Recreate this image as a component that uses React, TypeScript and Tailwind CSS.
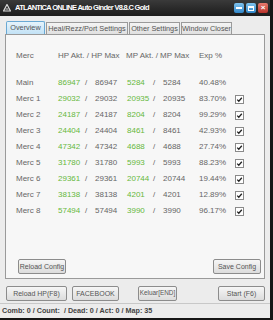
import React from "react";

type Row = {
  name: string;
  hp: string;
  mp: string;
  exp: string;
  check: boolean;
};

const rows: Row[] = [
  { name: "Main", hp: "86947", mp: "5284", exp: "40.48%", check: false },
  { name: "Merc 1", hp: "29032", mp: "20935", exp: "83.70%", check: true },
  { name: "Merc 2", hp: "24187", mp: "8204", exp: "99.29%", check: true },
  { name: "Merc 3", hp: "24404", mp: "8461", exp: "42.93%", check: true },
  { name: "Merc 4", hp: "47342", mp: "4688", exp: "27.74%", check: true },
  { name: "Merc 5", hp: "31780", mp: "5993", exp: "88.23%", check: true },
  { name: "Merc 6", hp: "29361", mp: "20744", exp: "19.44%", check: true },
  { name: "Merc 7", hp: "38138", mp: "4201", exp: "12.89%", check: true },
  { name: "Merc 8", hp: "57494", mp: "3990", exp: "96.17%", check: true },
];

const tabs = [
  { label: "Overview", w: "w-[39px]", active: true },
  { label: "Heal/Rezz/Port Settings", w: "w-[82px]", active: false },
  { label: "Other Settings", w: "w-[51px]", active: false },
  { label: "Window Closer", w: "w-[51px]", active: false },
];

const Btn = ({ label, w, size = "text-[7px]" }: { label: string; w: string; size?: string }) => (
  <button
    type="button"
    className={`${w} ${size} h-[15px] flex items-center justify-center whitespace-nowrap rounded-[2px] border border-[#8c8c8c] bg-gradient-to-b from-[#f6f6f6] to-[#dcdcdc] leading-none text-[#555]`}
  >
    {label}
  </button>
);

const CheckBox = () => (
  <div className="w-[9px] h-[9px] border border-[#8a8a8a] bg-white flex items-center justify-center">
    <svg width="7" height="7" viewBox="0 0 7 7">
      <path d="M1.2 3.6 L2.8 5.2 L5.8 1.8" stroke="#222" strokeWidth="1.3" fill="none" />
    </svg>
  </div>
);

const App: React.FC = () => {
  const cols = "grid grid-cols-[42px_27px_10px_32px_26px_10px_36px_36px_10px] items-center";

  return (
    <div
      className="w-[273px] h-[320px] bg-[#ececec] flex flex-col border-r-[3px] border-b-2 border-[#161616] overflow-hidden"
      style={{ fontFamily: '"Liberation Sans", Arial, sans-serif' }}
    >
      {/* title bar */}
      <div className="h-[16px] shrink-0 bg-gradient-to-b from-[#3a3a3a] to-[#1c1c1c] flex items-center pl-[3px] pr-[2px]">
        <svg width="8" height="8" viewBox="0 0 8 8" className="mr-[4px]">
          <path d="M4 0.5 L7.5 7 L0.5 7 Z" fill="none" stroke="#dcdcdc" strokeWidth="1.2" />
          <path d="M2.5 5 L5.5 5" stroke="#dcdcdc" strokeWidth="1" />
        </svg>
        <span className="text-[7.5px] font-bold tracking-[-0.7px] text-white leading-none whitespace-nowrap">
          ATLANTICA ONLINE Auto Ginder V8.8.C Gold
        </span>
        <div className="ml-auto flex gap-[2px]">
          <div className="w-[10px] h-[10px] rounded-[2px] bg-gradient-to-b from-[#7fc3ee] to-[#2f86c8] flex items-center justify-center">
            <div className="w-[6px] h-[2px] bg-white" />
          </div>
          <div className="w-[10px] h-[10px] rounded-[2px] bg-gradient-to-b from-[#7fc3ee] to-[#2f86c8] flex items-center justify-center">
            <div className="w-[6px] h-[5px] border border-white border-t-2" />
          </div>
          <div className="w-[10px] h-[10px] rounded-[2px] bg-gradient-to-b from-[#e87a6e] to-[#b8302a] flex items-center justify-center text-white text-[8px] font-bold leading-none">
            ×
          </div>
        </div>
      </div>

      {/* tabs */}
      <div className="mt-[5px] flex items-end pl-[6px] gap-[1px] h-[13px] shrink-0">
        {tabs.map((t) => (
          <div
            key={t.label}
            className={`${t.w} flex items-center justify-center border border-b-0 text-[7.3px] leading-none whitespace-nowrap text-[#555] ${
              t.active
                ? "h-[13px] bg-gradient-to-b from-[#e6f3fb] to-[#c2e2f6] border-[#6aa9d4] rounded-t-[2px]"
                : "h-[12px] bg-gradient-to-b from-[#f4f4f4] to-[#e0e0e0] border-[#9a9a9a]"
            }`}
          >
            {t.label}
          </div>
        ))}
      </div>

      {/* panel */}
      <div className="ml-[5px] mr-[5px] h-[245px] shrink-0 border border-[#9a9a9a] bg-[#f7f7f7] flex flex-col pl-[10px] pt-[13px] pb-[4px] text-[8px] text-[#666]">
        <div className={`${cols} h-[16px]`}>
          <span>Merc</span>
          <span className="col-span-3 whitespace-nowrap">HP Akt. / HP Max</span>
          <span className="col-span-3 whitespace-nowrap -ml-[1px]">MP Akt. / MP Max</span>
          <span>Exp %</span>
          <span />
        </div>
        <div className="h-[11px]" />
        {rows.map((r) => (
          <div key={r.name} className={`${cols} h-[16px] leading-none`}>
            <span>{r.name}</span>
            <span className="text-[#66b83c]">{r.hp}</span>
            <span>/</span>
            <span>{r.hp}</span>
            <span className="text-[#66b83c]">{r.mp}</span>
            <span>/</span>
            <span>{r.mp}</span>
            <span>{r.exp}</span>
            <span>{r.check ? <CheckBox /> : null}</span>
          </div>
        ))}
        <div className="flex-1" />
        <div className="flex items-center justify-between pl-[2px] pr-[3px]">
          <Btn label="Reload Config" w="w-[48px]" />
          <Btn label="Save Config" w="w-[48px]" />
        </div>
      </div>

      {/* bottom buttons */}
      <div className="mt-[7px] flex items-center pl-[6px] shrink-0">
        <Btn label="Reload HP(F8)" w="w-[61px]" />
        <div className="w-[5px]" />
        <Btn label="FACEBOOK" w="w-[47px]" />
        <div className="w-[19px]" />
        <Btn label="Keluar[END]" w="w-[39px]" size="text-[6.4px]" />
        <div className="w-[41px]" />
        <Btn label="Start (F6)" w="w-[47px]" />
      </div>

      {/* status bar */}
      <div className="mt-[2px] flex-1 border-t border-[#c8c8c8] flex items-center pl-[2px] text-[7.2px] font-bold text-[#444] whitespace-pre">
        {"Comb: 0 / Count:  / Dead: 0 / Act: 0 / Map: 35"}
      </div>
    </div>
  );
};

export default App;
